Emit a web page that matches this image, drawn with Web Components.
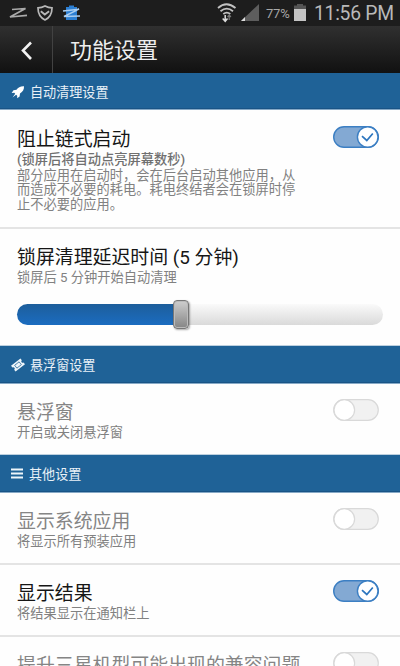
<!DOCTYPE html>
<html lang="zh-CN">
<head>
<meta charset="utf-8">
<title>功能设置</title>
<style>
html,body{margin:0;height:100%;overflow:hidden}
body{font-family:Roboto,"Noto Sans CJK SC",sans-serif;background:#fefefe}
</style>
</head>
<body>
<settings-page></settings-page>
<script>
const define = (name, html, setup) => {
  const t = document.createElement('template');
  t.innerHTML = html;
  customElements.define(name, class extends HTMLElement {
    constructor(){ super(); this.attachShadow({mode:'open'}).append(t.content.cloneNode(true)); }
    connectedCallback(){ if(setup) setup(this, this.shadowRoot); }
  });
};

define('status-bar', `
<style>
:host{display:flex;height:26px;background:#1d1d1d;color:#b9b9b9;align-items:center;box-sizing:border-box;white-space:nowrap}
svg{display:block;flex:none}
.right{margin-left:auto;display:flex;align-items:center;height:26px}
.pct{font-size:13px;line-height:26px;width:25px;margin:1px 2px 0 6px;color:#a8a8a8;letter-spacing:-.2px}
.time{font-size:19.3px;line-height:26px;width:81px;margin:1px 5px 0 7px;letter-spacing:-.25px}
</style>
<svg width="90" height="26" viewBox="0 0 90 26" fill="none">
  <path d="M12 9.500 25.500 8.500 10 17 27 15.400" stroke="#aaa" stroke-width="1.700"/>
  <path d="M45 6c2.500 1.400 4.800 1.900 7 1.900 0 6.100-2.300 9.700-7 12-4.700-2.300-7-5.900-7-12 2.200 0 4.500-.5 7-1.900Z" stroke="#b8b8b8" stroke-width="1.700"/>
  <path d="m40.800 11.300 4 3.300 4.300-3.300" stroke="#b8b8b8" stroke-width="1.900"/>
  <path d="M66 7h3V5.500h5V7h3v13H66Z" fill="#2c7fd3"/>
  <path d="m63 11 16-1.800-15 7.300 16-.500" stroke="#a9cdf0" stroke-width="1.500"/>
</svg>
<div class="right">
<svg width="45" height="26" viewBox="0 0 45 26" fill="none">
  <g transform="translate(2 0)">
  <path d="M1 8q8.500-7.500 17.500 0M3.500 11.200q6.300-5.200 12.500 0M6.300 14q3.500-2.700 7 0" stroke="#c2c2c2" stroke-width="1.800"/>
  <path d="M8.200 15v6M5.700 18.500l2.500 2.800 2.300-2.800" stroke="#ddd" stroke-width="1.500"/>
  <path d="M12.200 20v-5M10.500 17l1.700-2 1.700 2" stroke="#777" stroke-width="1.300"/>
  </g>
  <path d="M26 21 44 4v17Z" fill="#5d5d5d"/><path d="m26 21 4-4v4Z" fill="#ddd"/>
</svg>
<span class="pct">77%</span>
<svg width="14" height="26" viewBox="0 0 14 26"><path d="M4 4h6v1.500h3V9H1V5.500h3Z" fill="#555"/><path d="M1 9h12v12H1Z" fill="#c4c4c4"/></svg>
<span class="time">11:56 PM</span>
</div>`);

define('action-bar', `
<style>
:host{display:flex;height:47px;background:linear-gradient(#303030,#111);color:#eee}
.back{width:53px;border-right:1px solid #424242;box-sizing:border-box;flex:none}
h1{font-size:22px;font-weight:400;line-height:47px;margin:1px 0 -1px 17px;white-space:nowrap}
</style>
<div class="back"><svg width="52" height="47" viewBox="0 0 52 47" fill="none"><path d="m31 16.500-8 8 8 8.500" stroke="#f2f2f2" stroke-width="2.600"/></svg></div>
<h1><slot></slot></h1>`);

define('section-header', `
<style>
:host{display:flex;box-sizing:border-box;height:39px;background:#1f6297;border-top:1px solid #bdd0df;border-bottom:1px solid #86a9c6;box-shadow:inset 0 -1px #195486;color:#e9f1f7;font-size:13.1px;align-items:center}
:host([first]){height:37px;border-top-color:#1f6297}
svg{width:14px;height:14px;margin-left:11px;flex:none}
span{margin:2px 0 0 5px;line-height:20px;white-space:nowrap}
:host([icon=list]) span{margin-left:4px}
</style>
<svg viewBox="0 0 14 14"></svg><span><slot></slot></span>`, (el, root) => {
  const icons = {
    rocket:'<path fill="#fff" d="M13 1.200C9.500 1 7.200 2.300 5.500 4.800L2.500 5.200.6 8l2.700-.2.9 1-2.700 3.700 3.600-2.700 1.100 1 0 2.500 2.400-1.800.4-3C11.800 6.700 13.200 4.500 13 1.200Z"/>',
    ticket:'<g transform="rotate(-38 7 7)"><path fill="#eef5fa" d="M1 3.300h12v2.300a1.400 1.400 0 0 0 0 2.800v2.300H1V8.400a1.400 1.400 0 0 0 0-2.800Z"/><path d="M4.200 5.200h5.600v3.600H4.200Z" fill="none" stroke="#1f6297" stroke-width=".7"/></g>',
    list:'<path d="M0 2.500h12M0 6.500h12M0 10.500h12" stroke="#eef5fa" stroke-width="2"/>'
  };
  root.querySelector('svg').innerHTML = icons[el.getAttribute('icon')];
});

define('toggle-switch', `
<style>
:host{display:block;width:46px;height:22px;flex:none}
svg{display:block}
.on{display:none}
:host([on]) .on{display:block}
:host([on]) .off{display:none}
</style>
<svg class="on" width="46" height="22" viewBox="0 0 46 22" fill="none"><rect x=".7" y=".7" width="44.600" height="20.600" rx="10.300" fill="#83a9d3" stroke="#3c7fc3" stroke-width="1.400"/><circle cx="34.700" cy="11" r="10.300" fill="#fff" stroke="#3c7fc3" stroke-width="1.400"/><path d="m29 10.200 4.800 4.300 6-7" stroke="#2c75be" stroke-width="1.700"/></svg>
<svg class="off" width="46" height="22" viewBox="0 0 46 22"><rect x=".7" y=".7" width="44.600" height="20.600" rx="10.300" fill="#f1f1f1" stroke="#d9d9d9" stroke-width="1.200"/><circle cx="11.300" cy="11" r="10.300" fill="#fff" stroke="#d9d9d9" stroke-width="1.200"/></svg>`);

define('setting-row', `
<style>
:host{display:grid;grid-template-columns:1fr 46px;box-sizing:border-box;height:72px;padding:15px 21px 0 17px;border-bottom:2px solid #e4e4e4;color:#161616;align-content:start;align-items:start}
:host([last]){border-bottom:0}
:host([off]){color:#858585}
.title{font-size:18.9px;line-height:24px;white-space:nowrap;min-width:0;margin-top:2px}
.sub{font-size:13.25px;line-height:16px;color:#818181;white-space:nowrap;grid-column:1/3;margin-top:-.5px}
::slotted(b){display:block;font-weight:500;font-size:13.25px;color:#707070}
::slotted(p){margin:1px 0 0;line-height:14.6px}
</style>
<div class="title"><slot name="title"></slot></div>
<slot name="control"></slot>
<div class="sub"><slot></slot></div>`);

define('range-slider', `
<style>
:host{display:flex;align-items:center;height:30px;margin-top:13.5px}
.fill{width:156px;height:21px;border-radius:11px 0 0 11px;background:linear-gradient(#1d5e9b,#1b6cc0);flex:none}
.thumb{box-sizing:border-box;width:16px;height:29px;border-radius:4px;border:1.500px solid #777;background:linear-gradient(#cecece,#858585);box-shadow:inset 0 0 0 1px #bbb,1px 1px 2px #0005;flex:none;z-index:1}
.rest{width:194px;height:21px;border-radius:0 11px 11px 0;background:linear-gradient(#fafafa,#dadada);flex:none}
</style>
<div class="fill"></div><div class="thumb"></div><div class="rest"></div>`);

define('settings-page', `
<style>
:host{display:flex;flex-direction:column;width:400px;height:666px;overflow:hidden;background:#fefefe}
:host>*{flex:none}
</style>
<status-bar></status-bar>
<action-bar>功能设置</action-bar>
<section-header icon="rocket" first>自动清理设置</section-header>
<setting-row style="height:119px;padding-top:16px">
  <span slot="title">阻止链式启动</span><toggle-switch slot="control" on></toggle-switch>
  <b>(锁屏后将自动点亮屏幕数秒)</b>
  <p>部分应用在启动时，会在后台启动其他应用，从<br>而造成不必要的耗电。耗电终结者会在锁屏时停<br>止不必要的应用。</p>
</setting-row>
<setting-row style="height:116px" last>
  <span slot="title">锁屏清理延迟时间 (5 分钟)</span>
  <span slot="control"></span>
  锁屏后 5 分钟开始自动清理
  <range-slider></range-slider>
</setting-row>
<section-header icon="ticket">悬浮窗设置</section-header>
<setting-row style="height:70px" off last>
  <span slot="title">悬浮窗</span><toggle-switch slot="control"></toggle-switch>
  开启或关闭悬浮窗
</setting-row>
<section-header icon="list">其他设置</section-header>
<setting-row off>
  <span slot="title">显示系统应用</span><toggle-switch slot="control"></toggle-switch>
  将显示所有预装应用
</setting-row>
<setting-row>
  <span slot="title">显示结果</span><toggle-switch slot="control" on></toggle-switch>
  将结果显示在通知栏上
</setting-row>
<setting-row off>
  <span slot="title">提升三星机型可能出现的兼容问题</span><toggle-switch slot="control"></toggle-switch>
</setting-row>`);
</script>
</body>
</html>
